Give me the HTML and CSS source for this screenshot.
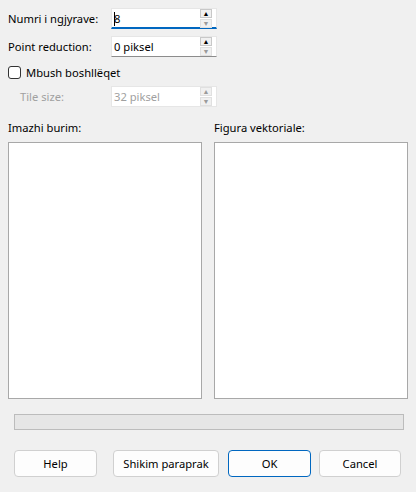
FILE: index.html
```html
<!DOCTYPE html>
<html lang="sq">
<head>
  <meta charset="UTF-8">
  <meta name="viewport" content="width=device-width, initial-scale=1.0">
  <title>Vektorizim</title>
  <link rel="stylesheet" href="styles.css">
</head>
<body>
<div class="dialog">
  <div class="row">
    <div class="label">Numri i ngjyrave:</div>
    <div class="spin focused">
      <span class="value"><span class="caret"></span>8</span>
      <div class="arrows">
        <div class="arrow up">&#9650;</div>
        <div class="arrow down off">&#9660;</div>
      </div>
    </div>
  </div>
  <div class="row">
    <div class="label">Point reduction:</div>
    <div class="spin">
      <span class="value">0 piksel</span>
      <div class="arrows">
        <div class="arrow up">&#9650;</div>
        <div class="arrow down off">&#9660;</div>
      </div>
    </div>
  </div>
  <label class="check-row">
    <span class="checkbox"></span>
    <span>Mbush boshllëqet</span>
  </label>
  <div class="row disabled">
    <div class="label indent">Tile size:</div>
    <div class="spin">
      <span class="value">32 piksel</span>
      <div class="arrows">
        <div class="arrow up off">&#9650;</div>
        <div class="arrow down off">&#9660;</div>
      </div>
    </div>
  </div>

  <div class="previews">
    <div class="preview">
      <div class="caption">Imazhi burim:</div>
      <div class="canvas"></div>
    </div>
    <div class="preview">
      <div class="caption">Figura vektoriale:</div>
      <div class="canvas"></div>
    </div>
  </div>

  <div class="progress"></div>

  <div class="buttons">
    <button class="btn help">Help</button>
    <button class="btn preview-btn">Shikim paraprak</button>
    <button class="btn ok">OK</button>
    <button class="btn cancel">Cancel</button>
  </div>
</div>
</body>
</html>
```

FILE: styles.css
```css
body {
  margin: 0;
  background: #f0f0f0;
  font-family: "Noto Sans", "Open Sans", sans-serif;
  font-size: 11.2px;
  color: #000;
}

.dialog {
  width: 400px;
  padding: 8px 8px 0 8px;
}

.row {
  display: flex;
  align-items: center;
  height: 21px;
  margin-bottom: 7px;
}

.label {
  width: 103px;
}

.label.indent {
  padding-left: 12px;
  width: 91px;
}

.disabled {
  color: #a0a0a0;
}

.spin {
  width: 106px;
  height: 21px;
  box-sizing: border-box;
  background: #fff;
  border: 1px solid #e6e6e6;
  border-bottom: 1px solid #8c8c8c;
  display: flex;
  align-items: center;
  justify-content: space-between;
  padding: 0 4px 0 2px;
}

.spin.focused {
  border-bottom: 2px solid #0067c0;
}

.disabled .spin {
  border-bottom-color: #e6e6e6;
}

.caret {
  display: inline-block;
  width: 1px;
  height: 14px;
  background: #000;
  vertical-align: -3px;
  margin-right: -1px;
}

.arrows {
  display: flex;
  flex-direction: column;
  gap: 1px;
}

.arrow {
  width: 12px;
  height: 9px;
  box-sizing: border-box;
  font-size: 7px;
  line-height: 8px;
  text-align: center;
  color: #000;
  border: 1px solid #c8c8c8;
  background: #f0f0f0;
}

.arrow.off {
  color: #9a9a9a;
  border-color: #e0e0e0;
}

.check-row {
  display: flex;
  align-items: center;
  height: 16px;
  margin-bottom: 6px;
}

.checkbox {
  width: 13px;
  height: 13px;
  box-sizing: border-box;
  border: 1px solid #333;
  border-radius: 3px;
  background: #fff;
  margin-right: 5px;
}

.previews {
  display: flex;
  gap: 12px;
  margin-top: 14px;
}

.preview {
  width: 194px;
}

.caption {
  height: 14px;
  line-height: 14px;
  margin-bottom: 7px;
}

.canvas {
  height: 257px;
  box-sizing: border-box;
  background: #fff;
  border: 1px solid #a8a8a8;
}

.progress {
  margin: 15px 4px 0 6px;
  height: 16px;
  box-sizing: border-box;
  background: #e6e6e6;
  border: 1px solid #bcbcbc;
}

.buttons {
  display: flex;
  margin: 20px 0 0 6px;
}

.btn {
  height: 27px;
  box-sizing: border-box;
  background: #fdfdfd;
  border: 1px solid #d0d0d0;
  border-radius: 4px;
  font-family: inherit;
  font-size: 11.2px;
  color: #000;
  padding: 0;
}

.help { width: 83px; }
.preview-btn { width: 106px; margin-left: 16px; }
.ok { width: 83px; margin-left: 9px; border-color: #0067c0; }
.cancel { width: 82px; margin-left: 8px; }
```
